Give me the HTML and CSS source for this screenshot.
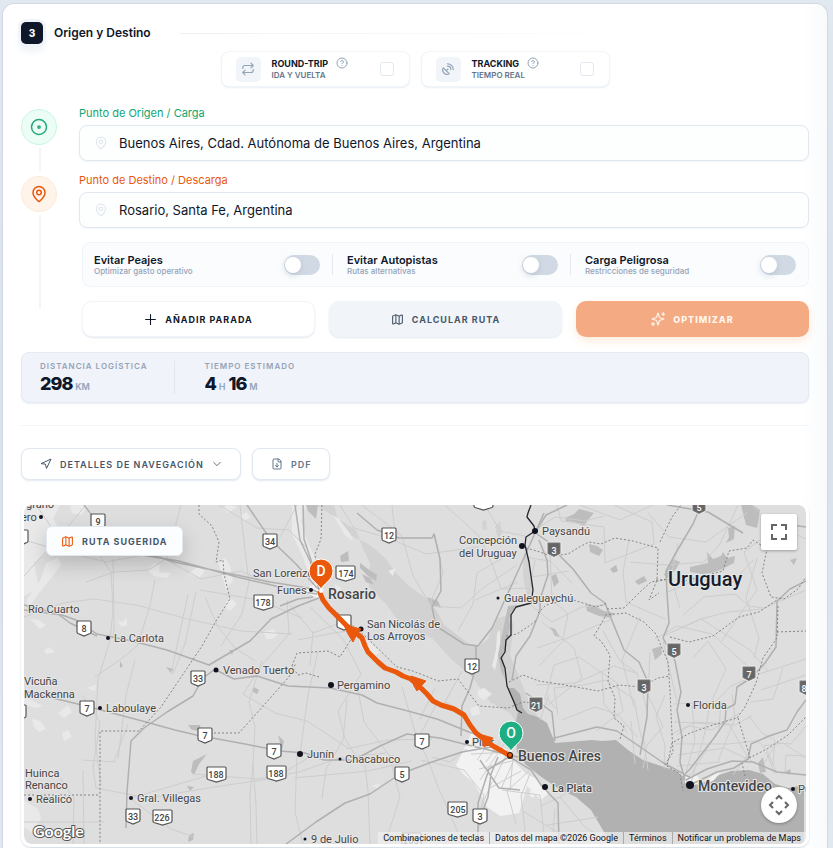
FILE: index.html
```html
<!DOCTYPE html>
<html lang="es">
<head>
<meta charset="utf-8">
<meta name="viewport" content="width=device-width, initial-scale=1">
<title>Origen y Destino</title>
<link rel="stylesheet" href="styles.css">
</head>
<body>
<svg class="defs" aria-hidden="true">
  <symbol id="i-pin" viewBox="0 0 24 24"><path d="M20 10c0 5-5.500 10.200-7.400 11.800a1 1 0 0 1-1.200 0C9.500 20.200 4 15 4 10a8 8 0 0 1 16 0"/><circle cx="12" cy="10" r="3"/></symbol>
  <symbol id="i-help" viewBox="0 0 24 24"><circle cx="12" cy="12" r="10"/><path d="M9.100 9a3 3 0 0 1 5.800 1c0 2-3 3-3 3M12 17h.01"/></symbol>
  <symbol id="i-map" viewBox="0 0 24 24"><path d="M14.100 5.550a2 2 0 0 0 1.800 0l3.650-1.830A1 1 0 0 1 21 4.620v12.760a1 1 0 0 1-.550.900l-4.550 2.270a2 2 0 0 1-1.800 0l-4.200-2.100a2 2 0 0 0-1.800 0l-3.650 1.830A1 1 0 0 1 3 19.380V6.620a1 1 0 0 1 .550-.900L8.100 3.450a2 2 0 0 1 1.800 0zM15 5.760v15M9 3.240v15"/></symbol>
</svg>
<main class="card">
  <header class="head">
    <span class="step">3</span>
    <h2 class="title">Origen y Destino</h2>
    <span class="rule"></span>
  </header>

  <div class="options">
    <label class="option">
      <span class="option-icon"><svg class="icon" viewBox="0 0 24 24"><path d="m17 2 4 4-4 4M3 11v-1a4 4 0 0 1 4-4h14M7 22l-4-4 4-4M21 13v1a4 4 0 0 1-4 4H3"/></svg></span>
      <span class="option-text"><strong>ROUND-TRIP <svg class="icon help"><use href="#i-help"/></svg></strong><small>IDA Y VUELTA</small></span>
      <input class="check" type="checkbox">
    </label>
    <label class="option">
      <span class="option-icon"><svg class="icon" viewBox="0 0 24 24"><path d="M4 10a7.310 7.310 0 0 0 10 10ZM9 15l3-3M17 13a6 6 0 0 0-6-6M21 13A10 10 0 0 0 11 3"/></svg></span>
      <span class="option-text"><strong>TRACKING <svg class="icon help"><use href="#i-help"/></svg></strong><small>TIEMPO REAL</small></span>
      <input class="check" type="checkbox">
    </label>
  </div>

  <section class="stops">
    <div class="stop">
      <div class="track">
        <span class="marker origin"><svg class="icon" viewBox="0 0 24 24"><circle cx="12" cy="12" r="10"/><circle cx="12" cy="12" r="1.500"/></svg></span>
        <span class="line"></span>
      </div>
      <div class="field">
        <label class="label origin-text" for="origin">Punto de Origen / Carga</label>
        <div class="control"><svg class="icon"><use href="#i-pin"/></svg><input id="origin" type="text" value="Buenos Aires, Cdad. Autónoma de Buenos Aires, Argentina"></div>
      </div>
    </div>
    <div class="stop">
      <div class="track track-last">
        <span class="marker target"><svg class="icon"><use href="#i-pin"/></svg></span>
        <span class="line"></span>
      </div>
      <div class="field">
        <label class="label target-text" for="target">Punto de Destino / Descarga</label>
        <div class="control"><svg class="icon"><use href="#i-pin"/></svg><input id="target" type="text" value="Rosario, Santa Fe, Argentina"></div>
        <div class="toggles">
          <label class="toggle"><span><strong>Evitar Peajes</strong><small>Optimizar gasto operativo</small></span><input class="switch" type="checkbox"></label>
          <label class="toggle"><span><strong>Evitar Autopistas</strong><small>Rutas alternativas</small></span><input class="switch" type="checkbox"></label>
          <label class="toggle"><span><strong>Carga Peligrosa</strong><small>Restricciones de seguridad</small></span><input class="switch" type="checkbox"></label>
        </div>
        <div class="actions">
          <button class="btn add" type="button"><svg class="icon" viewBox="0 0 24 24"><path d="M3 12h18M12 3v18"/></svg>AÑADIR PARADA</button>
          <button class="btn calc" type="button"><svg class="icon"><use href="#i-map"/></svg>CALCULAR RUTA</button>
          <button class="btn optimize" type="button"><svg class="icon" viewBox="0 0 24 24"><path d="M9.940 15.500A2 2 0 0 0 8.500 14.060l-6.140-1.580a.500.500 0 0 1 0-.960L8.500 9.940A2 2 0 0 0 9.940 8.500l1.580-6.140a.500.500 0 0 1 .960 0L14.060 8.500A2 2 0 0 0 15.500 9.940l6.140 1.580a.500.500 0 0 1 0 .960L15.500 14.060a2 2 0 0 0-1.440 1.440l-1.580 6.140a.500.500 0 0 1-.960 0zM21 1v5M23.500 3.500h-5"/><circle cx="3.500" cy="20.500" r="2"/></svg>OPTIMIZAR</button>
        </div>
      </div>
    </div>
  </section>

  <section class="metrics">
    <div class="metric"><span class="metric-name">DISTANCIA LOGÍSTICA</span><span class="metric-value">298 <small>KM</small></span></div>
    <div class="metric"><span class="metric-name">TIEMPO ESTIMADO</span><span class="metric-value">4 <small>H</small> 16 <small>M</small></span></div>
  </section>

  <div class="tools">
    <button class="btn tool" type="button"><svg class="icon" viewBox="0 0 24 24"><path d="m3 11 19-9-9 19-2-8z"/></svg>DETALLES DE NAVEGACIÓN<svg class="icon chevron" viewBox="0 0 24 24"><path d="m4 8 8 8 8-8"/></svg></button>
    <button class="btn tool pdf" type="button"><svg class="icon" viewBox="0 0 24 24"><path d="M15 2H6a2 2 0 0 0-2 2v16a2 2 0 0 0 2 2h12a2 2 0 0 0 2-2V7zM14 2v4a2 2 0 0 0 2 2h4M12 18v-7M9 15l3 3 3-3"/></svg>PDF</button>
  </div>

  <section class="map">
    <svg class="canvas" viewBox="24 505 782 339" role="img" aria-label="Mapa de la ruta">
      <defs>
        <symbol id="s2" viewBox="0 0 16 17" overflow="visible"><path d="M2 1h12q1 0 1 1v10q0 1-1 1.500L8 16 2 13.500Q1 13 1 12V2q0-1 1-1z"/></symbol>
        <symbol id="s3" viewBox="0 0 21 17" overflow="visible"><path d="M2 1h17q1 0 1 1v10q0 1-1 1.500l-8.500 2.500L2 13.500Q1 13 1 12V2q0-1 1-1z"/></symbol>
        <symbol id="u" viewBox="0 0 14 16" overflow="visible"><path class="u-edge" d="M0 0h14v12l-7 3.500L0 12z"/><path class="u-face" d="M1.500 1.500h11v9.600L7 14l-5.500-2.900z"/></symbol>
      </defs>
      <rect class="land" x="24" y="505" width="782" height="339"/>

      <g class="pale">
        <path d="M24 505h36l-7 14 8 12-15 22-12 10 5 25-15 8z"/>
        <path d="M46 563l12-5 3 7-9 12-16 20-7 10-3-6 14-20zM70 505h18l-6 10-10-2zM148 571l6-8 6 2-1 7 12 1-4 5-13-2zM188 574l9-7 8 4-6 7zM218 561l7-3 5 8 3 15-7 8-4-13zM226 602l6-3 5 5-7 7-5-3zM117 621l5 1 5-4v7l-5 2zM264 632l9-3 5 5-6 5h-6zM44 650l6-3 5 5-9 2zM30 619l9 1 7 5-6 4zM58 713l10-8 4 7-8 6zM32 719l8 2 6 8-7 3-5-5zM62 733l6-3 4 7-8 4zM87 688l9-3-1 6zM24 697l9 4 10 5-8 2-11-4zM240 516l6-4 5 5-7 4zM222 508l6-3 9 2-9 6z"/>
      </g>
      <path class="delta" d="M316 505h18l4 15 12 15 20 10 16 14 10 14 14 14 20 14 8 12 6 12 16 12 10 8 8 2 10-8 8-20 12-4 6 10-4 30 6 14 12 30 8 14 6 22-8 4-12-8-12-18-20-11-17-24-23-20-17-19-31-13-16-22-17-17 1-24-6-12-8-21z"/>
      <path class="delta" d="M495 527l5-6 2 12-4 6zM524 552l5 10 4 30-6 4-4-20zM482 522l4-3 1 10-4 1z"/>
      <g class="pale">
        <path d="M292 505h14l-5 16 6 19 8 18 3 20-6 5-9-26-11-23zM300 540l7 6 9 23-7-7zM333 515l6 4 12 16 2 6-8-6zM388 571l8-3-3 8zM358 633l6 3 16 16-8 7-12-13zM335 584l7 5-6 3zM376 783l4 2-3 3zM372 786l5-2 2 5zM24 800l14 9 3 10-9 14-8-6zM48 825l5 8-7 4zM497 633l3-3v16l-5 24-3-4 4-16zM478 690l6-2 8 6-8 6-6-4zM470 708l8-2 2 8-8 2z"/>
      </g>
      <g class="mid">
        <path d="M306 505h12l-2 14-8-8zM340 556l8-5 1 10-8 1zM360 563l8 6 9 6-1 6-8-5-8-8zM362 574l8 4 4 7-8-3zM427 597l11 4 3 7-10-3z"/>
        <path d="M565 518l9-4 5-5 8 2 7 2-6 7-4 6-10-4-8-1zM589 544l8 2 6 4-4 6-9-4zM610 569l6-4 2 6-5 2zM551 576l5-2 3 8-5 5zM741 505l5 20 11 3 3-18-7-5zM735 526l-7 2 1 9-3 6 8-4zM673 559l7 3-4 7-8 9-4-3zM690 567l18-4-1-11 6 7 8-3 2-4 4 6 8-2-1 7-14 7-8 3-10 1-12-2zM652 649l9-3 1 8-7 6zM550 627l5 2 5 8-5-1zM586 604l9 2 9 5 10 2-3 5-12-2-12-5zM790 560l7-2-3 7zM635 581l9-5 3 5-9 4z"/>
        <path d="M193 761l14-7-8 10-5 11-3-3zM187 786l7 1-4 4zM254 687l5 3-2 4-5-3zM278 735l6 6-2 9zM188 725h12l1 6-9-1zM120 661l3 5-3 2zM166 667l8 2-3 4zM229 650h5l-2 5zM189 835l5-2-1 7-5 2zM758 763l5-6 3 15-6 1zM784 772l7-3-1 6z"/>
        <path d="M508 606l12-1-8 6-3 8 1 8-4 20-3 8 2 24-4-8-3-16 4-20z"/>
      </g>
      <path class="water" d="M508 688l6 0 6 6 3 14 5 6 10 3 9 6 8 20 37-3 10 1 14-1 12 10 15 10 18 6 15 5 7 6 6 6 9 2 12-5 9-5 12-4 18-1 14 4 12 10 13 4 16-3v63H612l-8-16-13-22-15-13-17-8-19-13-15-12-8-12-1-14-2-8 4-18-4-8z"/>
      <path class="urban" d="M467 743l4-10-2-3 9 3 8 4 8 7 12 5 5 9 14 15 12 6 12 14-8 7-14-14-4 14-4 13-19 3-13-9-6-12-8-13-10-8-7-9zM685 777l12-2 3 7-8 4-7-3zM705 781l10-7 6-2-7 8-7 4zM307 588l10-6 7 8-5 9-12-6zM532 788l7 3-7 7-3-4z"/>

      <g class="minor">
        <path d="M24 540l42 12 40 10 48-9 47 26 40-8 44 20M36 505l18 26 35 9 22 32 2 38-3 30-12 40-3 60 6 45M24 617l39-14 31-4 42 6 52 14 53 12 51 3M24 576l36-40 26-31M86 582l28-10 35-2 18-12 14-53M113 559l1 69-1 10M196 592l-11 52-12 30M200 590l59 10 43 18M155 580l-5 25-12 40-18 15-25 17M135 660l-9 35-8 64M188 594l-17 80M205 597l13 30 17 21 20 13M240 505l5 45 4 32-7 32-21 32M219 505l38 23 32 2 18 18M287 600l2 34-26 30-20 30 32 19 32 8 41 27M290 605l23 28 38-14M298 640l36-7 20-3M313 631l-3 35M262 660l-13 42 6 25-2 38 3 40 1 39M297 505l-17 32M310 607l33 32 18 35-23 37 7 28 16 25 33-9"/>
        <path d="M82 695l18 27-7 46 3 20 52 10 73-12 54-8 33-20M83 760l31 2 14-38M60 778l14 20-1 46M83 770l1 74M24 822h80M131 798l75-22M131 799l40 30 23 8M193 774l64 5 42-7 40-14 47-5M253 764l-3 30 1 50M297 754l-2 58 8 32M358 690l6 32 25 33 11 42-15 47M365 765l3 26 2 53M294 778l74-7 44-10M402 687l13 45 15 33 8 22 25 57M318 652l-10 43-8 59M347 700l-4 40-17 29-4 30M420 719l15-31M346 749l42-9 44-1M462 671l-17 31 19 10M421 760l43 10 20 25-8 49M432 757l18 5 17-13M436 705l-15 28"/>
        <path d="M340 505l14 23 34 10 38 16 53-7M362 505l40 31 11 40 18 30 30 2 22-20 34-23M435 535l8 38-12 28 10 24 20 14M485 505l15 26 25 5M515 551l-38 22-4 31-15 27M475 600l43-18M445 505l34 31 14 30 8 23 28-1M395 534l-3-29M524 557l26 4 22 22M535 530l20-13 30 4 19-5M532 577l37-6M557 505l4 16 43 6 1 36 49-19-2-22-38-17M535 560l-8 42 25 20 30-15 24-2M550 550l2 50 16 14-5 25-26 9M540 665l25-26 47-20M542 622l32 26 8 30-34 27M536 685l40-2 38-17 22 7M545 700l9-35 25-8 38 26 6 28-27 20M562 720l33-13 22 7 20 23M629 540l-6 32 3 30 39 17M630 562l36 3 38-3 16-18 18-39M648 513l21 24 37 5 42-30M668 592l28-12 37 2 20-22M672 632l29-13 27-7 35-3 21-12M683 615l21-18 31-3 14 12 15 2 42-18M665 635l36-16 27 17 22 14 18 21M722 641l14-21 21-30-13-38 17-13M757 558l-11 40 13 40-5 20M640 617l-18 43 12 47M603 631l17 30 17 12 10 37M655 639l22-13 35 8 43 39M694 657l14-16 18 28-17 38M680 608l-9-30 7-35M677 702l-6-26-8-35M580 505l40 15 33-15M752 505l20 19 34 15M759 674l47-15M761 690l45-15"/>
      </g>
      <g class="minor">
        <path d="M558 715l-4-27 29-3 23-5 28 19 7 38M602 672l2 32 23 28M650 652l-2 43 15 32-16 18-4 23M665 695l-9 22 9 28-1 24M674 704l41-2 16-16 18-8M674 722l61 3 17-9M677 735l17-13 35 2 18 32-14 19M670 735l18-9 24 4 28-17M692 705l3 35-12 44M709 709l-4 23-14 51M721 702l-2 28-33 52M732 694l3 24-17 43M676 744h52l27-3M678 755l46-7 28 13M677 766l43-4M748 715l14 18 13 7-2 25M750 702l23-3 10-31M763 746l20-3 23 15M765 762l11-19 15 1 15-18M775 774l-9-22M785 773l1-18 20 1M756 739l11 12 9 20M548 699l8 10M540 720l9-25M635 764l-4-43M648 770l-5-35"/>
        <path d="M477 760l15-21M486 762l14-20M480 780l24-36M493 782l15-31M501 789l12-27M471 754l40-2M479 769l41-10M490 788l31-17M507 791l22-20M507 791l9 33M492 782l-18 42M513 758l-3 31M502 790l38 5 5 49M530 774l-9 22 4 34-13 14M541 806l25-12M547 825l27-4 24-4M560 797l25 30 27 17M523 811l40 25M555 809l-3 35"/>
      </g>
      <g class="major">
        <path d="M84 505l14 18 31 30 50 8 58 16 60 14 20 3M126 547l48 15 48 10 48 10 38 6 12 5M247 505l24 35 25 24 21 24M24 610l38 5 14 5 21 14 35 7 35 9 42 15 17-10 24-14 21-22 27-13 21-8M24 605l34 9 12 9 27 13M214 670l-11 8-10 18-26 16-23 16-13 13-4 51-1 36M24 691l62 15 60 16 29 8 21 5 49 9 35 7 25 2 19 7h30l26-14 27-12 33 4 24 6 29 7 33 8 24 2M216 670l18 9 23-3 31 10 42 2 32 7 15 8 31 8 29 8 32 13 16 5M286 844l30-22 29-19 25-9 30-20 32-12 30-10 29-5M357 513l20 17 22 8 33 0 2-4 6 25 1 32-9 16 4 19 28 18 14 2 14-18 22-48 30-67M476 646v20l-6 22-8 18-1 30"/>
        <path d="M295 505l5 35 10 21 10 31M303 505l1 34 10 30M313 597l-15 2-18 7M567 505l-21 10-10 16M539 540l8 20 1 15-8 24 0 12-10 25-14 20-4 24M537 534l13 9 10 13 13 13 18 24 14 10 10 25 9 22 15 12 9 20-1 35-7 38M699 510l-6 14-19 32-8 15 1 22 2 30-6 15 12 23 6 31-4 18 5 27-2 25 5 18M806 581l-16 8-13 12-1 46-11 16-14 15-14 9-2 17-9 5-1 13-11 16-24 31-18 18M806 700l-9 12-10 18-18 6-18 8-3 15-14 9-17 4-23 11-8 9M543 741l54-14 20 4 45 31 29 16M677 783l-18-17M686 780l21-11 25-8 21 1 24 10 29 3M555 741l-3-29-12-9-14-10M667 505l41 7 35 21M777 523l29 4M510 757l21 13 10 15 17 18 1 41M509 757l-20 12-11 34v41M498 757l-7 17-3 23-6 16M480 760l19 28 21 2"/>
      </g>
      <g class="border">
        <path d="M199 505v9l13 12 7 16-3 20 7-2 1 14 6 25-14 22-14 25-41 61-22 24H100v113M202 733h37l50-56 7-14M24 795h76M322 505l-1 34-6 15 3 34 10 17 24 20 14 12 31 30 16 4 25 10 20-2 21 27 29 2 15-6 11 1M319 677l-13-4-8 2-6-9M292 666l5-13 31-2 12 6 10-16 8-9M526 548l14 4 11 4 17-2 13-8 8-4 12 2 14-6 18 3 25 7-1 32-8 20 10-7M660 542l12-25 9-12M538 613l8-8 24-6 26 8 12-4M607 609l17-1 15-15 12-11 14-2M656 580l17-1M605 615l21-2 18 9 12 12 12 28 2 29 2 43 1 18-8 13 15 9 3 17M605 617l-11 19 7 5 9 14-2 26 7 17-1 20 10 8-4 13M509 682l14-7 16 6 26 4 33 6 21-6 22 2 17-9 12-2M506 636l11-2 12-8 8-6M681 582l42-11 6-20 18-3 6-8 14 9-5 24 9 24 13 2 14-10 8-12M670 637l19 5 24-6 26-19 20-5 18-12M778 606l-1 32-14 20-7 25-11 24-8 11-24 7-23 8-18 10-5 23M738 718l10 33 3 9M749 758l18-9 21-14 18-18M745 776l-3-13M777 632l29-1"/>
      </g>
      <path class="river" d="M531 505l-3 8-1 4 7 9 1 5-9 6-1 8 4 17 4 28-2 13-15 4-5 8v20l-5 5-1 12-4 6 4 10 2 18 7 16 3 8 5 3"/>

      <g class="shield">
        <use href="#s2" x="90" y="513" width="16" height="17"/><text x="98" y="525">9</text>
        <use href="#s2" x="262" y="533" width="16" height="17"/><text x="270" y="545">34</text>
        <use href="#s3" x="253" y="594" width="21" height="17"/><text x="263" y="606">178</text>
        <use href="#s2" x="76" y="620" width="16" height="17"/><text x="84" y="632">8</text>
        <use href="#s2" x="190" y="670" width="16" height="17"/><text x="198" y="682">33</text>
        <use href="#s2" x="381" y="527" width="16" height="17"/><text x="389" y="539">12</text>
        <use href="#s3" x="473" y="494" width="21" height="17"/>
        <use href="#s3" x="335" y="565" width="21" height="17"/><text x="346" y="577">174</text>
        <use href="#s2" x="336" y="614" width="16" height="17"/>
        <use href="#s2" x="464" y="658" width="16" height="17"/><text x="472" y="670">12</text>
        <use href="#s2" x="79" y="700" width="16" height="17"/><text x="87" y="712">7</text>
        <use href="#s2" x="197" y="727" width="16" height="17"/><text x="205" y="739">7</text>
        <use href="#s2" x="266" y="743" width="16" height="17"/><text x="274" y="755">7</text>
        <use href="#s3" x="206" y="766" width="21" height="17"/><text x="216" y="778">188</text>
        <use href="#s3" x="266" y="765" width="21" height="17"/><text x="276" y="777">188</text>
        <use href="#s2" x="125" y="808" width="16" height="17"/><text x="133" y="820">33</text>
        <use href="#s3" x="152" y="809" width="21" height="17"/><text x="162" y="821">226</text>
        <use href="#s2" x="394" y="766" width="16" height="17"/><text x="402" y="778">5</text>
        <use href="#s2" x="414" y="733" width="16" height="17"/><text x="422" y="745">7</text>
        <use href="#s3" x="447" y="801" width="21" height="17"/><text x="458" y="813">205</text>
        <use href="#s2" x="472" y="808" width="16" height="17"/><text x="480" y="820">3</text>
        <use href="#s3" x="401" y="832" width="21" height="17"/><text x="411" y="844">205</text>
        <use href="#s2" x="13" y="529" width="16" height="17"/><use href="#s2" x="11" y="704" width="16" height="17"/>
      </g>
      <g class="shield-uy">
        <use href="#u" x="547" y="542" width="14" height="16"/><text x="554" y="554">3</text>
        <use href="#u" x="692" y="499" width="14" height="16"/><text x="699" y="511">5</text>
        <use href="#u" x="667" y="643" width="14" height="16"/><text x="674" y="655">5</text>
        <use href="#u" x="742" y="666" width="14" height="16"/><text x="749" y="678">7</text>
        <use href="#u" x="637" y="679" width="14" height="16"/><text x="644" y="691">3</text>
        <use href="#u" x="529" y="697" width="14" height="16"/><text x="536" y="709">21</text>
        <use href="#u" x="799" y="680" width="14" height="16"/><text x="804" y="692">8</text>
      </g>

      <g class="dots">
        <circle cx="41" cy="517" r="2"/><circle cx="108" cy="638" r="2"/><circle cx="216" cy="670" r="2.500"/><circle cx="100" cy="708" r="2"/><circle cx="30" cy="799" r="2"/><circle cx="131" cy="798" r="2"/><circle cx="311" cy="590" r="2"/><circle cx="361" cy="629" r="2.500"/><circle cx="522" cy="546" r="3"/><circle cx="535" cy="531" r="3"/><circle cx="498" cy="598" r="1.500"/><circle cx="331" cy="685" r="3"/><circle cx="300" cy="754" r="3"/><circle cx="340" cy="759" r="1.500"/><circle cx="305" cy="839" r="1.500"/><circle cx="467" cy="742" r="2"/><circle cx="510" cy="756" r="3"/><circle cx="545" cy="787" r="3"/><circle cx="688" cy="705" r="2"/><circle cx="690" cy="785" r="4"/><circle cx="793" cy="789" r="2"/>
      </g>
      <g class="city">
        <text x="26" y="508">grano</text><text x="21" y="521">ero</text>
        <text x="28" y="613">Río Cuarto</text><text x="114" y="642">La Carlota</text>
        <text x="223" y="674">Venado Tuerto</text><text x="24" y="685">Vicuña</text><text x="24" y="698">Mackenna</text>
        <text x="106" y="712">Laboulaye</text><text x="25" y="777">Huinca</text><text x="25" y="789">Renanco</text>
        <text x="36" y="803">Realicó</text><text x="137" y="802">Gral. Villegas</text>
        <text x="253" y="577">San Lorenzo</text><text x="277" y="594">Funes</text>
        <text x="367" y="628">San Nicolás de</text><text x="367" y="640">Los Arroyos</text>
        <text x="459" y="544">Concepción</text><text x="459" y="557">del Uruguay</text>
        <text x="542" y="535">Paysandú</text><text x="504" y="602">Gualeguaychú</text>
        <text x="337" y="689">Pergamino</text><text x="307" y="758">Junín</text><text x="345" y="763">Chacabuco</text>
        <text x="311" y="843">9 de Julio</text><text x="472" y="746">Pilar</text><text class="town" x="552" y="792">La Plata</text>
        <text x="693" y="709">Florida</text><text x="798" y="793">Punta</text>
      </g>
      <g class="capital"><text x="328" y="599">Rosario</text><text x="518" y="761">Buenos Aires</text><text x="698" y="791">Montevideo</text></g>
      <text class="country" x="668" y="586">Uruguay</text>

      <path class="route" d="M320 593l3 7 6 8 10 10 8 8 8 6 7 6 3 8 3 6 10 10 7 6 11 4 7 4 8 3 8 7 8 8 6 7 8 4 13 4 10 6 6 10 6 8 9 7 8 6 9 5 8 5"/>
      <path class="arrow" d="M344 625l17 4-4 5-4 8-5-8zM411 676l15 5-4 4-5 6-3-5zM479 734l14 4-3 5-6 4-1-6z"/>
      <circle class="end" cx="321" cy="591" r="2"/><circle class="end-dot" cx="510" cy="755" r="2.500"/>
      <path class="pin pin-d" d="M321 590c-1-6-12-9-12-19a12 12 0 0 1 24 0c0 10-11 13-12 19z"/><text class="pin-text" x="321" y="576">D</text>
      <path class="pin pin-o" d="M511 752c-1-6-12-9-12-19a12 12 0 0 1 24 0c0 10-11 13-12 19z"/><text class="pin-text" x="511" y="738">O</text>
      <text class="logo" x="33" y="837">Google</text>
    </svg>
    <div class="badge"><svg class="icon"><use href="#i-map"/></svg>RUTA SUGERIDA</div>
    <button class="map-btn full" type="button" aria-label="Pantalla completa"><svg viewBox="0 0 18 18"><path d="M2 7V2h5M11 2h5v5M16 11v5h-5M7 16H2v-5"/></svg></button>
    <button class="map-btn pan" type="button" aria-label="Mover el mapa"><svg viewBox="0 0 22 22"><path d="M8 5l3-3 3 3M8 17l3 3 3-3M5 8l-3 3 3 3M17 8l3 3-3 3"/></svg></button>
    <nav class="legal"><button type="button">Combinaciones de teclas</button><span>Datos del mapa ©2026 Google</span><a href="#terminos">Términos</a><a href="#notificar">Notificar un problema de Maps</a></nav>
  </section>
</main>
</body>
</html>
```
FILE: styles.css
```css
* { box-sizing: border-box; }
body {
  margin: 0;
  padding: 3px 5px 0 2px;
  min-height: 100vh;
  background: linear-gradient(#e2e8f0, #d9e1eb 50%, #e2e8f0);
  font-family: Inter, "Liberation Sans", sans-serif;
  color: #0f172a;
}
button, input { font: inherit; color: inherit; margin: 0; }
button { cursor: pointer; }
.defs { display: none; }
.icon {
  width: 12px;
  height: 12px;
  flex: none;
  fill: none;
  stroke: currentColor;
  stroke-width: 2;
  stroke-linecap: round;
  stroke-linejoin: round;
}
.card {
  display: flex;
  flex-direction: column;
  min-height: calc(100vh - 3px);
  padding: 18px 18px 0;
  border: 1px solid #cfd8e3;
  border-bottom: 0;
  border-radius: 12px 12px 0 0;
  background: linear-gradient(90deg, #fff calc(100% - 24px), #f8fafc);
}

.head { display: flex; align-items: center; height: 22px; }
.step {
  width: 22px;
  height: 22px;
  border-radius: 5px;
  background: #0f172a;
  color: #fff;
  font-size: 10px;
  font-weight: 800;
  line-height: 22px;
  text-align: center;
  box-shadow: 0 0 0 3px #f1f5f9, 0 6px 10px #e9eef4;
}
.title { margin: 0 28px 0 11px; font-size: 12px; font-weight: 600; line-height: 20px; }
.rule { flex: 1; height: 1px; background: linear-gradient(90deg, #eef2f6, #fff 80%); }

.options { display: flex; justify-content: center; gap: 11px; margin-top: 7px; }
.option {
  display: flex;
  align-items: center;
  width: 189px;
  height: 36px;
  padding: 0 15px 0 14px;
  border: 1px solid #f1f5f9;
  border-radius: 8px;
  background: #fff;
  box-shadow: 0 1px 2px #e9eef4;
}
.option-icon {
  display: grid;
  place-items: center;
  width: 25px;
  height: 25px;
  border-radius: 5px;
  background: #f1f5f9;
  color: #94a3b8;
}
.option-icon .icon { width: 14px; height: 14px; }
.option-text { display: flex; flex-direction: column; flex: 1; margin-left: 11px; }
.option-text strong { display: flex; align-items: center; gap: 8px; height: 12px; font-size: 9px; font-weight: 700; white-space: nowrap; }
.option-text small { font-size: 8px; font-weight: 600; line-height: 12px; color: #64748b; }
.help { color: #94a3b8; }
.check {
  appearance: none;
  width: 14px;
  height: 14px;
  border: 1px solid #e2e8f0;
  border-radius: 3px;
  background: #fff;
}

.stops { display: flex; flex-direction: column; gap: 13px; margin-top: 20px; }
.stop { display: flex; gap: 22px; }
.track { display: flex; flex-direction: column; align-items: center; width: 36px; padding-top: 2px; }
.track .line { flex: 1; width: 2px; margin: 3px 0 -10px 2px; background: #f1f5f9; }
.track-last .line { margin-bottom: 29px; }
.marker { display: grid; place-items: center; width: 36px; height: 36px; border: 1px solid; border-radius: 50%; }
.marker .icon { width: 18px; height: 18px; }
.origin { background: #ecfdf5; border-color: #c6f6e2; color: #22aa7a; }
.target { background: #fff4ea; border-color: #feead6; color: #ea580c; }
.field { flex: 1; min-width: 0; }
.label { display: block; margin-bottom: 5px; font-size: 11px; font-weight: 400; line-height: 13px; }
.origin-text { color: #10a571; }
.target-text { color: #ea580c; }
.control {
  display: flex;
  align-items: center;
  height: 36px;
  padding: 0 14px;
  border: 1px solid #e2e8f0;
  border-radius: 8px;
  background: #fdfefe;
  box-shadow: 0 1px 2px #f1f5f9;
  color: #e2e8f0;
}
.control .icon { width: 14px; height: 14px; }
.control input { flex: 1; min-width: 0; margin-left: 11px; padding: 0; border: 0; outline: 0; background: none; font-size: 13px; color: #0f172a; }

.toggles {
  display: grid;
  grid-template-columns: repeat(3, 1fr);
  height: 45px;
  margin: 14px 0 0 3px;
  padding-left: 11px;
  border: 1px solid #f1f5f9;
  border-radius: 8px;
  background: #fafcfd;
}
.toggle { display: flex; align-items: center; justify-content: space-between; padding-right: 12px; }
.toggle + .toggle::before { content: ""; width: 1px; height: 21px; margin-right: 14px; background: #e2e8f0; }
.toggle span { flex: 1; white-space: nowrap; }
.toggle strong { display: block; font-size: 11px; font-weight: 600; line-height: 13px; }
.toggle small { display: block; font-size: 8px; font-weight: 500; line-height: 9px; color: #94a3b8; }
.switch { appearance: none; display: flex; width: 36px; height: 20px; padding: 2px 1px; border-radius: 10px; background: #d1dae4; }
.switch::before { content: ""; width: 16px; height: 16px; border-radius: 50%; background: #fff; box-shadow: 0 2px 6px #94a3b866; }

.actions { display: grid; grid-template-columns: repeat(3, 1fr); gap: 14px; margin: 14px 0 0 3px; }
.btn {
  display: flex;
  align-items: center;
  justify-content: center;
  gap: 8px;
  height: 36px;
  padding: 0 18px;
  border: 1px solid #f1f5f9;
  border-radius: 10px;
  background: #fff;
  font-size: 9px;
  font-weight: 700;
  letter-spacing: 1px;
  white-space: nowrap;
  box-shadow: 0 1px 2px #e2e8f0;
}
.btn .icon { width: 13px; height: 13px; }
.calc { background: #f1f5f9; color: #475569; }
.optimize { border: 0; background: #f4aa82; color: #fff6ee; font-weight: 800; box-shadow: 0 4px 10px #fdebdd; }
.optimize .icon { width: 14px; height: 14px; }

.metrics {
  display: flex;
  height: 51px;
  margin-top: 15px;
  padding: 8px 18px;
  border: 1px solid #e5eaf2;
  border-radius: 8px;
  background: #f0f3f9;
  box-shadow: 0 1px 2px #e9eef4;
}
.metric { display: flex; flex-direction: column; }
.metric + .metric { margin-left: 27px; padding-left: 29px; border-left: 1px solid #dfe6ee; }
.metric-name { font-size: 8px; font-weight: 600; line-height: 10px; letter-spacing: 1px; color: #94a3b8; }
.metric-value { font-size: 18px; font-weight: 800; line-height: 25px; letter-spacing: -1px; }
.metric-value small { font-size: 9px; font-weight: 600; letter-spacing: 0; color: #94a3b8; }

.tools { display: flex; gap: 11px; margin-top: 22px; padding-top: 22px; border-top: 1px solid #f1f5f9; }
.tool { height: 32px; border-color: #e2e8f0; border-radius: 8px; color: #475569; font-weight: 600; }
.tool .icon { width: 12px; height: 12px; }
.tool .chevron { width: 10px; height: 10px; }
.pdf { color: #64748b; }

.map {
  position: relative;
  margin-top: 22px;
  border: 3px solid #fff;
  border-radius: 10px;
  overflow: hidden;
  box-shadow: 0 1px 2px #cbd5e1;
}
.canvas { display: block; width: 100%; border-radius: 8px; font-family: Roboto, sans-serif; }
.land { fill: #dedede; }
.pale { fill: #e9e9e9; }
.delta { fill: #d2d2d2; }
.mid { fill: #bdbdbd; }
.water { fill: #b1b1b1; }
.urban { fill: #f2f2f2; }
.minor, .major, .border, .river, .route { fill: none; stroke-linejoin: round; }
.minor { stroke: #cdcdcd; stroke-width: 1; }
.major { stroke: #b0b0b0; stroke-width: 1.5; }
.border { stroke: #858585; stroke-width: 1; stroke-dasharray: 2 2; }
.river { stroke: #24252d; stroke-width: 1.3; }
.shield { fill: #fff; stroke: #555; stroke-width: 1.2; }
.shield text, .shield-uy text { stroke: none; fill: #444; font-size: 9px; font-weight: 500; text-anchor: middle; }
.shield-uy text { fill: #fff; }
.u-edge { fill: #777; stroke: #eee; stroke-width: 1; }
.u-face { fill: #666; }
.dots { fill: #10131f; }
.city text, .capital text, .country { fill: #454545; font-size: 11px; stroke: #e8e8e8; stroke-width: 2; paint-order: stroke; stroke-linejoin: round; }
.city .town { font-weight: 500; }
.capital text { font-size: 14px; font-weight: 500; }
.country { fill: #161b2d; font-size: 20px; font-weight: 500; }
.route { stroke: #ea580c; stroke-width: 5; stroke-linecap: round; }
.arrow { fill: #ea580c; stroke: #ea580c; }
.end { fill: #fff; }
.end-dot { fill: #ea580c; stroke: #111; }
.pin { stroke: #fff; stroke-width: 1; }
.pin-d { fill: #ea580c; }
.pin-o { fill: #1daf83; }
.pin-text { fill: #fff; font-size: 14px; font-weight: 500; text-anchor: middle; }
.logo { fill: #fff; stroke: #555; stroke-width: 2; paint-order: stroke; font-family: Lato, sans-serif; font-size: 16px; font-weight: 700; }

.badge {
  position: absolute;
  top: 21px;
  left: 22px;
  display: flex;
  align-items: center;
  gap: 8px;
  height: 30px;
  padding: 0 14px;
  border: 1px solid #e2e8f0;
  border-radius: 6px;
  background: #fcfdfe;
  color: #475569;
  font-size: 9px;
  font-weight: 700;
  letter-spacing: 1px;
  box-shadow: 0 8px 20px #0000002e;
}
.badge .icon { width: 13px; height: 13px; color: #ea580c; }
.map-btn {
  position: absolute;
  right: 9px;
  display: grid;
  place-items: center;
  width: 36px;
  height: 36px;
  padding: 0;
  border: 0;
  background: #fff;
  box-shadow: 0 1px 3px #0000004d;
}
.map-btn svg { width: 18px; fill: none; stroke: #666; stroke-width: 2; }
.full { top: 9px; border-radius: 2px; }
.pan { bottom: 21px; border-radius: 50%; }
.pan svg { width: 22px; }
.legal {
  position: absolute;
  right: 0;
  bottom: 0;
  display: flex;
  font-family: Roboto, sans-serif;
  font-size: 9px;
  line-height: 12px;
  white-space: nowrap;
  border-radius: 0 0 8px;
  background: #eeeeeebf;
}
.legal > * { padding: 0 5px; border: 0; background: none; color: #111; text-decoration: none; }
.legal > * + * { border-left: 1px solid #aaa; }
```
